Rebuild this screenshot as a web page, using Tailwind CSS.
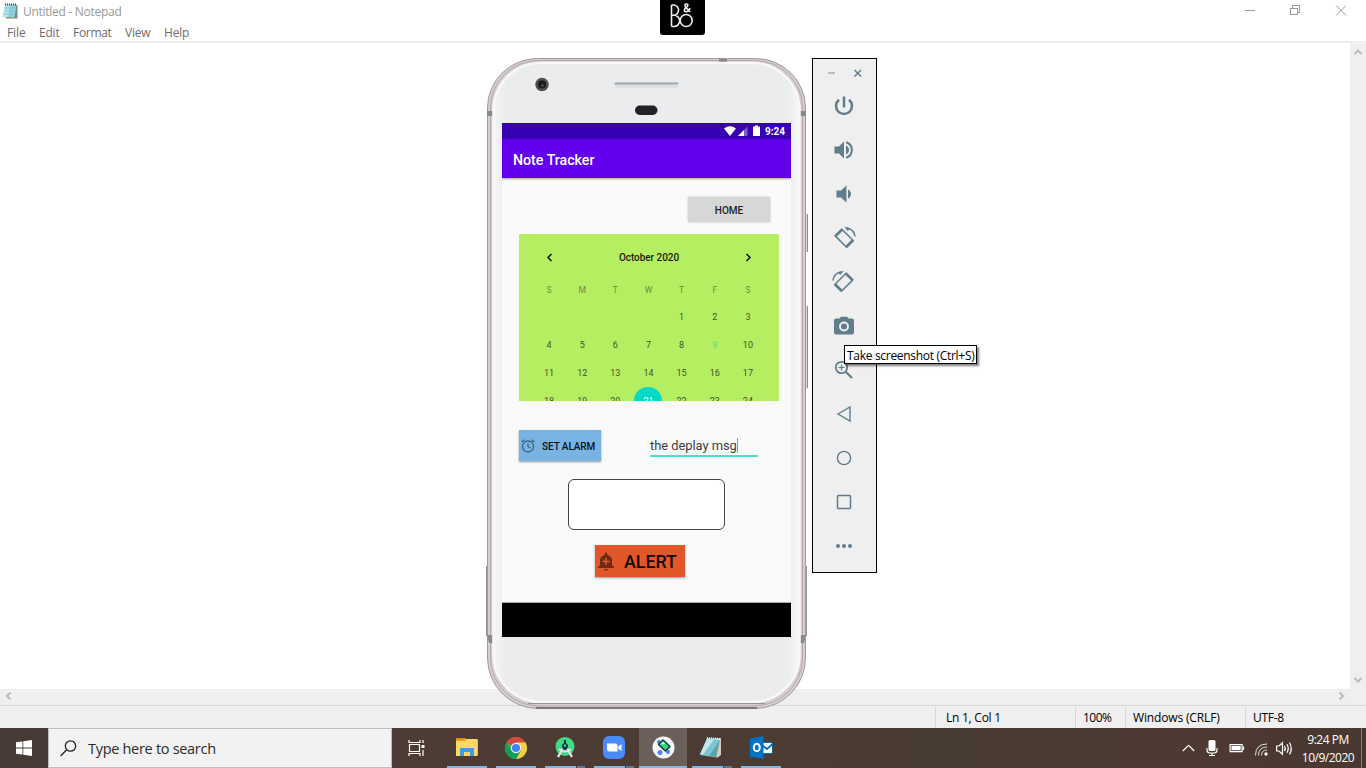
<!DOCTYPE html>
<html lang="en">
<head>
<meta charset="utf-8">
<title>Untitled - Notepad</title>
<script src="https://cdn.jsdelivr.net/npm/@tailwindcss/browser@4"></script>
</head>
<body class="relative flex h-[768px] w-[1366px] flex-col overflow-hidden bg-white font-['Open_Sans',sans-serif] text-[12px] text-black">

<!-- Notepad title bar -->
<header class="flex h-[22px] shrink-0 items-center">
  <svg class="ml-[2px] shrink-0" width="17" height="18" viewBox="0 0 17 18"><path d="M3 3h12.500v13.500H4z" fill="#8c8a68"/><path d="M3 2.500h11.500L13 15.500 1 15z" fill="#8fd0dc"/><path d="M3 3h5L6 15H1z" fill="#b6e3ea"/><path d="M14.500 3v12.500h-2z" fill="#3f9db0"/><path d="M3 2.500h12" stroke="#444" stroke-dasharray="1 1" stroke-width="2"/><path d="M3 6h10M3 9h9M2 12h10" stroke="#6fb9c8" stroke-width=".6"/></svg>
  <span class="ml-[4px] mt-[2px] tracking-[-0.28px] text-[#999]">Untitled - Notepad</span>
  <div class="ml-auto flex h-full w-[138px] items-center">
    <svg width="138" height="22" viewBox="0 0 138 22" fill="none" stroke="#999" shape-rendering="crispEdges"><path d="M17 10.500h10M62.500 8.500h7v6h-7zM64.500 8V5.500h7v7H70"/><path d="M108 5.500l10 10M118 5.500l-10 10" shape-rendering="auto"/></svg>
  </div>
</header>
<nav class="flex h-[19px] shrink-0 items-center gap-[14px] pl-[7px] pt-[3px] text-[#6d6d6d]">
  <span class="w-[18px] whitespace-nowrap tracking-[-0.1px]">File</span><span class="w-[20px] whitespace-nowrap tracking-[-0.2px]">Edit</span><span class="w-[38px] whitespace-nowrap tracking-[-0.3px]">Format</span><span class="w-[25px] whitespace-nowrap tracking-[-0.2px]">View</span><span class="tracking-[-0.2px]">Help</span>
</nav>
<main class="flex h-[648px] shrink-0 border-t-2 border-[#efefef]">
  <div class="grow bg-white"></div>
  <aside class="flex w-4 flex-col items-center justify-between bg-[#efefef] pb-[6px] pt-[6px]">
    <svg width="8" height="6" fill="none" stroke="#bbb" stroke-width="2"><path d="M.5 5L4 1.500 7.500 5"/></svg>
    <svg width="8" height="6" fill="none" stroke="#bbb" stroke-width="2"><path d="M.5 1L4 4.500 7.500 1"/></svg>
  </aside>
</main>
<div class="flex h-4 shrink-0 items-center justify-between bg-[#efefef] pl-[5px] pr-[21px] pb-[2px]">
  <svg width="7" height="8" fill="none" stroke="#bbb" stroke-width="2"><path d="M5.500.5L2 4l3.500 3.500"/></svg>
  <svg width="7" height="8" fill="none" stroke="#bbb" stroke-width="2"><path d="M1.500.5L5 4 1.500 7.500"/></svg>
</div>
<footer class="flex h-[23px] shrink-0 justify-end border-t border-[#d7d7d7] bg-[#efefef] pt-[1px] leading-[21px]">
  <span class="w-[140px] border-l border-[#d7d7d7] pl-[10px] tracking-[-0.25px]">Ln 1, Col 1</span>
  <span class="w-[50px] border-l border-[#d7d7d7] pl-[7px] tracking-[-0.5px]">100%</span>
  <span class="w-[120px] border-l border-[#d7d7d7] pl-[7px] tracking-[-0.15px]">Windows (CRLF)</span>
  <span class="w-[121px] border-l border-[#d7d7d7] pl-[7px] tracking-[-0.3px]">UTF-8</span>
</footer>

<!-- Windows taskbar -->
<div class="flex h-10 shrink-0 bg-[linear-gradient(90deg,#483a35,#4d3b34_35%,#493c33_70%,#4d3a33_85%,#49382f)] text-white">
  <div class="flex w-12 items-center justify-center"><svg width="16" height="16" viewBox="0 0 16 16" fill="#fff"><path d="M0 2.300l6.500-.9v6.200H0zM7.300 1.200L16 0v7.600H7.300zM0 8.400h6.500v6.200L0 13.700zM7.300 8.400H16V16l-8.700-1.200z"/></svg></div>
  <div class="flex w-[344px] items-center border border-[#bdbdbd] bg-[#f2f2f2] pl-[11px]">
    <svg width="17" height="17" viewBox="0 0 17 17" fill="none" stroke="#222" stroke-width="1.300"><circle cx="10.500" cy="6" r="5.200"/><path d="M6.700 9.800L.6 16"/></svg>
    <span class="ml-[11px] pt-[2px] text-[14.500px] tracking-[-0.3px] text-[#2b2b2b]">Type here to search</span>
  </div>
  <div class="flex w-[49px] items-center justify-center"><svg width="17" height="16" fill="none" stroke="#fff" stroke-width="1.200"><path d="M1 0v2.500h11V0M1 16v-2.500h11V16M1.500 4.500h10v7h-10zM15 0v3M15 10v6"/><path d="M13.500 5h3v3h-3z" fill="#fff" stroke="none"/></svg></div>
  <div class="flex gap-px pl-[2px]">
    <div class="flex w-12 flex-col items-center justify-between pt-[9px]"><svg width="22" height="22" viewBox="0 0 22 22"><path d="M0 1h9l2 2h11v15H0z" fill="#f0a81c"/><path d="M0 4h8.500l2-2H21.500v17H0z" fill="#ffd766"/><path d="M0 1h9l-1 2H0z" fill="#d99400"/><path d="M4 19v-7q0-1 1-1h12q1 0 1 1v7h-4v-4H8v4z" fill="#3c9de0"/></svg><i class="block h-[2px] w-10 bg-[#77b9ea]"></i></div>
    <div class="flex w-12 flex-col items-center justify-between pt-[9px]"><svg width="22" height="22" viewBox="0 0 22 22"><circle cx="11" cy="11" r="11" fill="#4caf50"/><path d="M11 11L1.500 5.500A11 11 0 0 1 20.500 5.500H11z" fill="#db4437"/><path d="M20.500 5.500A11 11 0 0 1 11 22l4.760-8.250L11 5.500z" fill="#ffcd40"/><path d="M1.500 5.500A11 11 0 0 0 11 22l4.800-8.200H6.200z" fill="#0f9d58"/><circle cx="11" cy="11" r="5.200" fill="#f4f4f4"/><circle cx="11" cy="11" r="4.100" fill="#4285f4"/></svg><i class="block h-[2px] w-10 bg-[#77b9ea]"></i></div>
    <div class="flex w-12 flex-col items-center justify-between pt-[9px]"><svg width="20" height="22" viewBox="0 0 20 22"><circle cx="10" cy="9.500" r="9.500" fill="#3ddc84"/><path d="M4 12q6 5 12 0" stroke="#dbe4ea" stroke-width="2" fill="none"/><path d="M10 8L3 20M10 8l7 12" stroke="#dbe4ea" stroke-width="2.400"/><path d="M9 3h2v3l2 2q0 5-3 5T7 8l2-2z" fill="#083042"/><circle cx="10" cy="8.500" r="1.300" fill="#3ddc84"/></svg><i class="flex h-[2px] w-10 gap-px"><b class="w-[31px] bg-[#77b9ea]"></b><b class="w-[8px] bg-[#587b97]"></b></i></div>
    <div class="flex w-12 flex-col items-center justify-between pt-[8px]"><svg width="22" height="23" viewBox="0 0 22 23"><rect width="22" height="23" rx="6" fill="#4a8cff"/><path d="M4 7.500h8q2.500 0 2.500 2.500v5.500h-8Q4 15.500 4 13zM15.300 10.500L18.500 8v7l-3.200-2.300z" fill="#fff"/></svg><i class="flex h-[2px] w-10 gap-px"><b class="w-[31px] bg-[#77b9ea]"></b><b class="w-[8px] bg-[#587b97]"></b></i></div>
    <div class="flex w-12 flex-col items-center justify-between bg-[#6b5f5a] pt-[8px]"><svg width="23" height="23" viewBox="0 0 23 23"><circle cx="11.500" cy="11.500" r="11" fill="#f7f8fa"/><circle cx="7" cy="6" r="2" fill="#4285f4"/><circle cx="8" cy="16.500" r="2.500" fill="#4c88ed"/><circle cx="16" cy="16" r="2" fill="#4285f4"/><path d="M6.500 8.500l4.500-4.500 7 6.500-4.500 4.500z" fill="#3bd37d" stroke="#073b42" stroke-width="1.500" stroke-linejoin="round"/><path d="M8 8.500l3-3 2.500 2.500z" fill="#b7f2d0"/></svg><i class="block h-[2px] w-12 bg-[#77b9ea]"></i></div>
    <div class="flex w-12 flex-col items-center justify-between pr-[2px] pt-[8px]"><svg width="24" height="23" viewBox="0 0 24 23"><path d="M8 3l14-1v17l-4 3z" fill="#d0ceb8"/><path d="M8 2l13 1-4 18.500L1 19z" fill="#7cc6d3"/><path d="M8 3l7 .5L4 18.500 1 18z" fill="#c4e6eb"/><path d="M21 4l-4 17-7-1z" fill="#46899a" opacity=".6"/><path d="M8 2l13 1" stroke="#eee" stroke-width="2" stroke-dasharray="1 1"/></svg><i class="ml-[2px] flex h-[2px] w-10 gap-px"><b class="w-[31px] bg-[#77b9ea]"></b><b class="w-[8px] bg-[#587b97]"></b></i></div>
    <div class="flex w-12 flex-col items-center justify-between pt-[8px]"><svg width="23" height="23" viewBox="0 0 23 23"><path d="M12 6h10.500v12H12z" fill="#0072c6"/><path d="M13 7h9v10h-9z" fill="#fff"/><path d="M12 9l5 4 5.500-5" fill="none" stroke="#0072c6" stroke-width="1.800"/><path d="M0 2.500L13.500 0v23L0 20.500z" fill="#0072c6"/><ellipse cx="6.800" cy="11.500" rx="3" ry="3.700" fill="none" stroke="#fff" stroke-width="2"/></svg><i class="block h-[2px] w-10 bg-[#77b9ea]"></i></div>
  </div>
  <div class="ml-auto flex items-center">
    <svg width="112" height="20" viewBox="0 0 112 20" fill="none" stroke="#fff" stroke-width="1.200"><path d="M.8 13L6.500 7.300l5.700 5.700"/><rect x="26.500" y="2" width="7" height="11" rx="1.500" fill="#fff" stroke="none"/><path d="M25 10v2q0 3 3 3h4q3 0 3-3v-2M30 15v2.500M27 17.500h6"/><path d="M48.100 6.600h12v7h-12zM61.500 8.500v3.500"/><path d="M49.500 8h9.200v4.200h-9.200z" fill="#fff" stroke="none"/><path d="M73.500 17.500Q73.500 6 85 6M76.500 17.500Q76.500 9 85 9M79.500 17.500Q79.500 12 85 12" stroke="#ddd" stroke-width="1"/><circle cx="84" cy="16" r="1.700" fill="#fff" stroke="none"/><path d="M94.600 8h2.400l3.500-3.300v11.600L97 13h-2.400zM102.500 8q1.500 2.500 0 5M105 6.300q2.500 4.200 0 8.400M107.500 4.500q3.500 6 0 12"/></svg>
    <div class="ml-[7px] w-[54px] whitespace-nowrap pt-px text-center text-[12px] leading-[18px] tracking-[-0.5px]"><div>9:24 PM</div><div>10/9/2020</div></div>
    <i class="ml-[6px] block h-10 w-px bg-[#857b76]"></i><i class="block w-[4px]"></i>
  </div>
</div>

<!-- Audio overlay badge -->
<div class="absolute left-[660px] top-0 h-[35px] w-[45px] rounded-b-[3px] bg-black">
  <svg width="45" height="35" fill="none" stroke="#eee" stroke-width="1.600"><path d="M11.500 5v21.500M11.500 5h2a5 5 0 0 1 0 10.200h-2M14 15.200a5.600 5.600 0 0 1 0 11.300h-2.500"/><circle cx="26.200" cy="20.500" r="6"/><path d="M30 12l-4.500-5q-1.500-3 .8-3t1.200 2.200L25 8.500q-1.800 3.200 1.200 3.200Q29 11.500 30 8"/></svg>
</div>

<!-- Emulated phone window -->
<section class="absolute left-[486px] top-[58px] flex h-[652px] w-[322px] flex-col font-[Roboto,sans-serif]">
  <svg class="absolute inset-0" width="322" height="652" viewBox="0 0 322 652">
    <defs><linearGradient id="face" x1="0" x2="1" y1="0" y2="0"><stop offset="0" stop-color="#f5f5f8"/><stop offset=".04" stop-color="#ebecee"/><stop offset=".96" stop-color="#ebecee"/><stop offset="1" stop-color="#f7f7fa"/></linearGradient></defs>
    <path d="M319.500 155v39M319.500 247v84" stroke="#b5b2b4" stroke-width="2"/><path d="M321.500 156v38M321.500 248v82" stroke="#8c8d8f"/>
    <path d="M1.500 50A50 49.500 0 0 1 51.500.5H269.500A50 49.500 0 0 1 319.500 50V600A51 50.500 0 0 1 268.500 650.500H52.500A51 50.500 0 0 1 1.500 600z" fill="#d6ced1" stroke="#a0989b"/>
    <path d="M4.500 50A48 47 0 0 1 52.500 2.500H268.500A48 47 0 0 1 316.500 50V600A49 48 0 0 1 267.500 648H53.500A49 48 0 0 1 4.500 600z" fill="none" stroke="#b0a8ac"/>
    <path d="M50 650H271" stroke="#81777c" stroke-width="2"/>
    <path d="M1 53h6v5H1zM314 53h6v5h-6zM1 577h5l2 8H3zM320 577h-5l-2 8h5zM233 1h8v3h-8z" fill="#8d878a"/>
    <path d="M.5 508v70M320.500 508v70" stroke="#9a9396"/>
    <path d="M7.500 52A47 47 0 0 1 54.500 5H266.500A47 47 0 0 1 313.500 52V597A47 47 0 0 1 266.500 644H54.500A47 47 0 0 1 7.500 597z" fill="url(#face)" stroke="#f8f8fa" stroke-width="2.500"/>
    <path d="M42 645.500H279" fill="none" stroke="#999497"/>
    <circle cx="56" cy="26.500" r="6.700" fill="#4d4f51"/><circle cx="56" cy="26.500" r="4" fill="#191a1b"/><circle cx="56.500" cy="27.500" r="1.300" fill="#565b3c"/>
    <rect x="128.500" y="24" width="64" height="6" rx="3" fill="#dcdfe3"/><path d="M129.500 25.500h62" stroke="#a3a8b1" stroke-width="1.800" stroke-linecap="round"/>
    <rect x="149" y="47.500" width="22.500" height="9.500" rx="4.700" fill="#202226"/>
  </svg>
  <div class="relative ml-[16px] mt-[65px] flex h-[514px] w-[289px] flex-col overflow-hidden bg-[#fafafa]">
    <div class="flex h-4 shrink-0 items-center justify-end bg-[#3700b3] pr-[6px] text-[10px] font-bold text-white">
      <svg class="mr-[3px]" width="38" height="12" viewBox="0 0 38 12" fill="#fff"><path d="M0 3.500q6-4.500 12 0L6 11z"/><path d="M14 11l9.500-9.500V11z" opacity=".35"/><path d="M14 11l6-6v6z"/><path d="M29.500 1.500H31V.5h3v1h1.500q.5 0 .5.500v8.500q0 .5-.5.500h-6q-.5 0-.5-.5V2q0-.5.500-.5z"/></svg><span class="pt-[1px]">9:24</span>
    </div>
    <div class="relative flex h-[39px] shrink-0 items-center bg-[#6200ee] pl-[11px] pt-[4px] text-[14.200px] font-medium text-white shadow-[0_1px_2px_rgba(0,0,0,.35)]">Note Tracker</div>
    <div class="flex h-[425px] shrink-0 flex-col border-b border-[#aaa]">
      <div class="ml-auto mr-[21px] mt-[19px] flex h-[25px] w-[82px] items-center justify-center rounded-[1px] bg-[#d6d7d7] pt-px text-[10px] font-medium text-[#222] shadow-[0_0_2px_rgba(0,0,0,.3)]">HOME</div>
      <div class="ml-[17px] mt-[12px] h-[167px] w-[260px] shrink-0 overflow-hidden bg-[#b6ee61] text-[9px] text-[#415522]">
        <div class="mt-[15px] flex h-4 items-center justify-between px-[27px] text-[10px] font-medium text-[#1b240e]">
          <svg width="7" height="9" fill="none" stroke="#111" stroke-width="1.500"><path d="M5.500 1L2 4.500 5.500 8"/></svg><span class="tracking-[-0.05px]">October 2020</span><svg width="7" height="9" fill="none" stroke="#111" stroke-width="1.500"><path d="M1.500 1L5 4.500 1.500 8"/></svg>
        </div>
        <div class="ml-[13.500px] mt-[17px] grid w-[232px] grid-cols-7 place-items-center text-[8.500px] leading-[16px] text-[#6d8a42]"><span>S</span><span>M</span><span>T</span><span>W</span><span>T</span><span>F</span><span>S</span></div>
        <div class="ml-[13.500px] mt-[5px] grid w-[232px] auto-rows-[28px] grid-cols-7 place-items-center">
          <span class="col-start-5 pt-[2px]">1</span><span class="pt-[2px]">2</span><span class="pt-[2px]">3</span>
          <span class="pt-[2px]">4</span><span class="pt-[2px]">5</span><span class="pt-[2px]">6</span><span class="pt-[2px]">7</span><span class="pt-[2px]">8</span><span class="pt-[2px] text-[#55d99b]">9</span><span class="pt-[2px]">10</span>
          <span class="pt-[2px]">11</span><span class="pt-[2px]">12</span><span class="pt-[2px]">13</span><span class="pt-[2px]">14</span><span class="pt-[2px]">15</span><span class="pt-[2px]">16</span><span class="pt-[2px]">17</span>
          <span class="pt-[2px]">18</span><span class="pt-[2px]">19</span><span class="pt-[2px]">20</span><span class="flex size-7 items-center justify-center rounded-full bg-[#03dac5] pt-[2px] text-white">21</span><span class="pt-[2px]">22</span><span class="pt-[2px]">23</span><span class="pt-[2px]">24</span>
        </div>
      </div>
      <div class="mt-[28px] flex h-[34px] shrink-0 pl-[17px]">
        <div class="mt-[1px] flex h-[31px] w-[82px] items-center bg-[#78b3e3] pl-[2px] text-[10px] font-medium text-[#0b1116] shadow-[0_1px_2px_rgba(0,0,0,.4)]">
          <svg width="14" height="14" viewBox="0 0 14 14" fill="none" stroke="#405e77" stroke-width="1.300"><circle cx="7" cy="7.500" r="5.500"/><path d="M7 4.500v3.200L9.300 9M.6 3L3.300.8M13.400 3L10.700.8"/></svg><span class="ml-[7px] whitespace-nowrap pt-px tracking-[-0.08px]">SET ALARM</span>
        </div>
        <div class="ml-[49px] flex h-[28px] w-[108px] items-center border-b-2 border-[#4fdccb] pt-[8px] text-[12.900px] text-[#3c3c3c]"><span class="whitespace-nowrap tracking-[-0.03px]">the deplay msg</span><i class="-mt-[2px] block h-[15px] w-px bg-[#03dac5]"></i></div>
      </div>
      <div class="ml-[66px] mt-[16px] h-[51px] w-[157px] shrink-0 rounded-[6px] border border-[#444] bg-white"></div>
      <div class="ml-[93px] mt-[15px] flex h-[32px] w-[90px] shrink-0 items-center bg-[#e2572a] pl-[3px] text-[17.800px] font-medium text-[#110703] shadow-[0_1px_2px_rgba(0,0,0,.4)]">
        <svg width="16" height="19" viewBox="0 0 16 19"><path d="M6 17h4q-.5 1.800-2 1.800T6 17zM0 16v-1.200l2-1.800V8.500q0-4.200 4.500-5.500V2q0-1.500 1.500-1.500T9.500 2v1Q14 4.300 14 8.500V13l2 1.800V16z" fill="#712b15"/><path d="M8 6v7M4.500 9.500h7" stroke="#e2572a" stroke-width="1.500"/></svg><span class="ml-[10px] pt-[2px]">ALERT</span>
      </div>
    </div>
    <div class="grow bg-black"></div>
  </div>
</section>

<!-- Emulator tool strip -->
<aside class="absolute left-[812px] top-[58px] flex h-[515px] w-[65px] flex-col border border-black bg-[#efefef] pl-[15px]">
  <svg width="34" height="24" viewBox="0 0 34 24" class="mt-[2px]" fill="none" stroke="#607d8b" stroke-width="1.500"><path d="M0 12h7" stroke="#9eafb7"/><path d="M26.500 9l6.500 6.500M33 9l-6.500 6.500"/></svg>
  <div class="flex flex-col gap-[16px] pt-[7px] pl-[1px] text-[#607d8b]">
    <svg width="30" height="28" viewBox="-15 -14 30 28" fill="none" stroke="currentColor" stroke-width="2.500"><path d="M0-9.500V1.500M-5-6.200A8 8 0 1 0 5-6.200"/></svg>
    <svg width="30" height="28" viewBox="-15 -14 30 28" fill="currentColor"><path d="M-9.500-3.500h4.500L0-8.500v17L-5 3.500h-4.500zM2-4.500q3 1.500 3 4.500T2 4.500z"/><path d="M2-7.700a8 8 0 0 1 0 15.400" fill="none" stroke="currentColor" stroke-width="2"/></svg>
    <svg width="30" height="28" viewBox="-15 -14 30 28" fill="currentColor"><path d="M-7.500-3.500h4.500L2.500-8.500v17L-3 3.500h-4.500zM4-4.500q3 1.500 3 4.500T4 4.500z"/></svg>
    <svg width="30" height="28" viewBox="-15 -14 30 28" fill="currentColor"><g transform="rotate(45)"><rect x="-8.700" y="-5.500" width="18" height="11" rx="1"/><rect x="-6" y="-4" width="12.600" height="8" fill="#efefef"/></g><path d="M3-10.300Q10.500-8 11-1.500" fill="none" stroke="currentColor" stroke-width="1.500"/><path d="M0-11.200L6-9.500 3.800-7z"/></svg>
    <svg width="30" height="28" viewBox="-15 -14 30 28" fill="currentColor"><g transform="scale(-1 1)"><g transform="rotate(45)"><rect x="-8.700" y="-5.500" width="18" height="11" rx="1"/><rect x="-6" y="-4" width="12.600" height="8" fill="#efefef"/></g><path d="M3-10.300Q10.500-8 11-1.500" fill="none" stroke="currentColor" stroke-width="1.500"/><path d="M0-11.200L6-9.500 3.800-7z"/></g></svg>
    <svg width="30" height="28" viewBox="-15 -14 30 28" fill="currentColor"><path d="M-8-7.500h3.500L-3-9.300h6L4.500-7.500H8q2 0 2 2V6.500q0 2-2 2H-8q-2 0-2-2V-5.500q0-2 2-2z"/><circle cy=".5" r="4" fill="none" stroke="#efefef" stroke-width="1.900"/></svg>
    <svg width="30" height="28" viewBox="-15 -14 30 28" fill="none" stroke="currentColor" stroke-width="1.700"><circle cx="-2.500" cy="-2.500" r="5.700"/><path d="M2 2l6 6" stroke-width="2.200"/><path d="M-5.500-2.500h6M-2.500-5.500v6" stroke-width="1.200"/></svg>
    <svg width="30" height="28" viewBox="-15 -14 30 28" fill="none" stroke="currentColor" stroke-width="1.400"><path d="M-6 0L6-7V7z"/></svg>
    <svg width="30" height="28" viewBox="-15 -14 30 28" fill="none" stroke="currentColor" stroke-width="1.400"><circle r="6.600"/></svg>
    <svg width="30" height="28" viewBox="-15 -14 30 28" fill="none" stroke="currentColor" stroke-width="1.500"><rect x="-6.500" y="-6.500" width="13" height="13" rx=".8"/></svg>
    <svg width="30" height="28" viewBox="-15 -14 30 28" fill="currentColor"><circle cx="-6" r="2"/><circle r="2"/><circle cx="6" r="2"/></svg>
  </div>
</aside>
<div class="absolute left-[844px] top-[345px] flex h-[19px] w-[133px] items-center whitespace-nowrap border border-black bg-white pl-[2px] pt-[2px] text-[12px] tracking-[-0.3px] shadow-[2px_2px_2px_rgba(0,0,0,.5)]">Take screenshot (Ctrl+S)</div>
</body>
</html>
